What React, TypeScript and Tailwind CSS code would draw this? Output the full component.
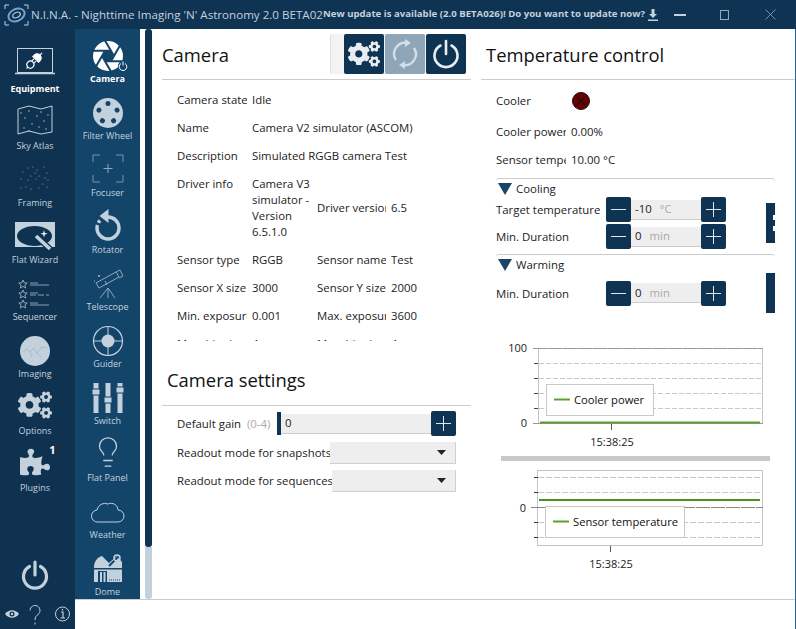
import React from "react";
import { FaCogs, FaPuzzlePiece } from "react-icons/fa";
import { Lightbulb } from "lucide-react";

const L = "#c3d1dd";
const D = "#8fa8bc";

function NavItem({ label, active, children }: { label: string; active?: boolean; children: React.ReactNode }) {
  return (
    <div className="relative flex h-[57px] shrink-0 flex-col items-center">
      <div className="flex h-[36px] w-[40px] items-center justify-center">{children}</div>
      <div className={`h-[14px] whitespace-nowrap text-[9px] leading-[15px] ${active ? "font-bold text-white" : "text-[#c3d1dd]"}`}>{label}</div>
    </div>
  );
}

const Svg = ({ children }: { children: React.ReactNode }) => (
  <svg width="40" height="36" viewBox="0 0 40 36">{children}</svg>
);

const Power = ({ size = 30, w = 3, c = L }: { size?: number; w?: number; c?: string }) => (
  <svg width={size} height={size} viewBox="0 0 30 30" fill="none" stroke={c} strokeWidth={w} strokeLinecap="round">
    <path d="M9.5 6.5a11.5 11.5 0 1 0 11 0" />
    <path d="M15 2v13" />
  </svg>
);

function Aperture() {
  return (
    <Svg>
      <g transform="translate(20 21)">
        <circle r="15" fill="#fff" />
        <polygon points="6,0 3,5.2 -3,5.2 -6,0 -3,-5.2 3,-5.2" fill="#13456b" />
        {[0, 60, 120, 180, 240, 300].map((a) => (
          <line key={a} x1="3" y1="5.2" x2="12" y2="-10.4" stroke="#13456b" strokeWidth="2" transform={`rotate(${a})`} />
        ))}
      </g>
      <circle cx="35" cy="31" r="5" fill="#13456b" />
      <g fill="none" stroke="#fff" strokeWidth="1">
        <path d="M33 28.5a3.8 3.8 0 1 0 4 0" />
        <path d="M35 26.5v4" />
      </g>
    </Svg>
  );
}

function Rotator() {
  return (
    <Svg>
      <path d="M20 11a11 11 0 1 1-11 11" fill="none" stroke={L} strokeWidth="3.4" />
      <path d="M9 22a11 11 0 0 1 3-7.5" fill="none" stroke={L} strokeWidth="3.4" strokeDasharray="3 2.4" />
      <path d="M20.5 3v14l-9-7z" fill={L} />
    </Svg>
  );
}

function Dome() {
  return (
    <Svg>
      <path d="M6 34V19C6 13 10 9 14 8l7 7 8-7 5 6v20z" fill={L} />
      <path d="M21 18L30 9" stroke="#13456b" strokeWidth="2" />
      <circle cx="29" cy="10" r="3" fill="none" stroke={L} strokeWidth="1.5" />
      <rect x="5" y="20" width="30" height="1.5" fill="#13456b" />
      <rect x="10" y="23" width="9" height="11" fill="#13456b" />
      <rect x="12" y="24" width="2" height="10" fill={L} />
      <rect x="15.5" y="24" width="2" height="10" fill={L} />
      <path d="M21 32h11" stroke="#13456b" strokeWidth="1" strokeDasharray="1 1" />
    </Svg>
  );
}

function Equipment() {
  return (
    <Svg>
      <rect x="2.500" y="3.500" width="35" height="24" fill="none" stroke={L} strokeWidth="1" />
      <path d="M0 28.500h40" stroke={L} strokeWidth="1.400" />
      <g transform="rotate(-45 20 15)" fill="none" stroke="#fff" strokeWidth="1.200">
        <circle cx="13.500" cy="15" r="3.500" />
        <path d="M8 15h2M17 13.500h3M17 16.500h3" />
        <path d="M21 11h2a4 4 0 0 1 0 8h-2z" fill="#fff" />
        <path d="M27 15h3" />
      </g>
    </Svg>
  );
}

function SkyAtlas() {
  const pts = [[6, 11], [10, 16], [14, 9], [17, 22], [22, 14], [26, 10], [29, 19], [33, 13], [9, 26], [24, 25], [31, 27], [14, 29]];
  return (
    <Svg>
      <path d="M3 7l11-3 12 3 11-3v26l-11 2-12-3-11 3z" fill="none" stroke={L} strokeWidth="1" />
      {pts.map(([x, y], i) => <circle key={i} cx={x} cy={y} r="0.7" fill={L} />)}
    </Svg>
  );
}

function Framing() {
  const pts = [[8, 13], [13, 9], [18, 8], [22, 11], [29, 8], [6, 20], [13, 21], [16, 17], [21, 20], [24, 17], [30, 19], [33, 21], [11, 28], [16, 30], [24, 29], [28, 25], [32, 28], [6, 29], [20, 14], [32, 14]];
  return <Svg>{pts.map(([x, y], i) => <circle key={i} cx={x} cy={y} r="0.6" fill={D} />)}</Svg>;
}

function FlatWizard() {
  return (
    <Svg>
      <rect x="0" y="6" width="40" height="25" fill={L} />
      <ellipse cx="19.500" cy="20" rx="17.500" ry="10" fill="#0f3250" />
      <path d="M21 20l14 13" stroke="#0f3250" strokeWidth="6" />
      <path d="M21 20l14 13" stroke={L} strokeWidth="3.600" />
      <path d="M29 14l.8 3 3 .8-3 .8-.8 3-.8-3-3-.8 3-.8z" fill="#fff" />
    </Svg>
  );
}

function Sequencer() {
  return (
    <Svg>
      {[11, 21, 31].map((y, i) => (
        <g key={y}>
          <path d={`M8 ${y - 4}l1.2 2.8 3 .2-2.300 2 .7 3-2.600-1.600-2.600 1.600.7-3-2.300-2 3-.2z`} fill="none" stroke={L} strokeWidth="0.7" />
          <path d={`M15 ${y - 1}h8`} stroke={L} strokeWidth="0.7" />
          <path d={`M15 ${y + 1}h19`} stroke={L} strokeWidth="0.7" strokeDasharray={i === 1 ? "6 2" : undefined} />
        </g>
      ))}
    </Svg>
  );
}

function Imaging() {
  return (
    <Svg>
      <circle cx="20" cy="21" r="15" fill={L} />
      <path d="M8 22l4-3 3 3 4-4 3 5 5-6 5 1M15 22l2 5M22 23l4 4" fill="none" stroke="#8ea4b5" strokeWidth="0.5" />
    </Svg>
  );
}

function Guider() {
  return (
    <Svg>
      <circle cx="20" cy="21" r="14.500" fill="none" stroke={L} strokeWidth="1.200" />
      <path d="M5.500 21h29M20 6.500v29" stroke={L} strokeWidth="1" />
      <circle cx="20" cy="21" r="6.500" fill={L} />
    </Svg>
  );
}

function Switch() {
  return (
    <Svg>
      {[
        [8, 12],
        [20, 20],
        [32, 10],
      ].map(([x, y]) => (
        <g key={x}>
          <rect x={x - 2.5} y="6" width="5" height="30" fill={L} />
          <rect x={x - 4} y={y} width="8" height="6" fill={L} stroke="#13456b" strokeWidth="1" />
        </g>
      ))}
    </Svg>
  );
}

function Cloud() {
  return (
    <Svg>
      <path d="M10 31a6 6 0 0 1-1-12 8 8 0 0 1 11-6 7 7 0 0 1 10 6 6 6 0 0 1 0 12z" fill="none" stroke={L} strokeWidth="1" />
    </Svg>
  );
}

function Focuser() {
  return (
    <Svg>
      <path d="M5 13V6h7M28 6h7v7M5 26v7h7M28 33h7v-7" fill="none" stroke={D} strokeWidth="1" opacity="0.8" />
      <path d="M20 15v9M15.500 19.500h9" stroke={D} strokeWidth="1" />
    </Svg>
  );
}

function FilterWheel() {
  return (
    <Svg>
      <circle cx="20" cy="21" r="15" fill={L} />
      {[0, 72, 144, 216, 288].map((a) => (
        <circle key={a} cx="20" cy="11.500" r="2.500" fill="#13456b" transform={`rotate(${a} 20 21)`} />
      ))}
    </Svg>
  );
}

function TelescopeIcon() {
  return (
    <Svg>
      <g fill="none" stroke={D} strokeWidth="1">
        <path d="M8 20l20-11 3 5-20 11z" />
        <path d="M28 9l4-2 3 6-4 2" />
        <path d="M17 18l2 4" />
        <path d="M20 25l-8 10M20 25v10M20 25l7 10" />
      </g>
      <path d="M10 13h2M11 12v2M6 18h1" stroke={L} strokeWidth="0.8" />
    </Svg>
  );
}

const Row = ({ children }: { children: React.ReactNode }) => <>{children}</>;

const Cell = ({ children, span }: { children?: React.ReactNode; span?: boolean }) => (
  <div className={`mr-[5px] overflow-hidden whitespace-nowrap py-[6px] leading-4 ${span ? "col-span-3" : ""}`}>{children}</div>
);

const Title = ({ children }: { children: React.ReactNode }) => <div className="pt-[1px] text-[18.400px] leading-[26px] text-[#111]">{children}</div>;

const Stepper = ({ value, unit }: { value: string; unit: string }) => (
  <div className="flex h-[25px] items-center">
    <IconBtn kind="minus" />
    <div className="flex h-[20px] w-[70px] items-center gap-[8px] border-b border-[#ccc] bg-[#eee] pl-[4px]">
      <span>{value}</span>
      <span className="text-[#aaa]">{unit}</span>
    </div>
    <IconBtn kind="plus" />
  </div>
);

const IconBtn = ({ kind }: { kind: "minus" | "plus" }) => (
  <div className="flex h-[25px] w-[25px] shrink-0 items-center justify-center rounded-[2px] bg-[#0f3353]">
    <svg width="15" height="15" viewBox="0 0 15 15" stroke="#dfe7ee" strokeWidth="1">
      <path d="M0 7.500h15" />
      {kind === "plus" && <path d="M7.500 0v15" />}
    </svg>
  </div>
);

const Triangle = () => (
  <svg width="14" height="12" viewBox="0 0 14 12" className="shrink-0"><path d="M0 0h14L7 12z" fill="#1a4468" /></svg>
);

const Select = ({ label, w }: { label: string; w: string }) => (
  <div className="flex h-[22px] items-center">
    <div className="flex-1 overflow-hidden whitespace-nowrap">{label}</div>
    <div className={`flex h-[22px] items-center justify-end border-b border-r border-[#d0d0d0] bg-[#eee] pr-[9px] ${w}`}>
      <svg width="9" height="5" viewBox="0 0 9 5"><path d="M0 0h9L4.500 5z" fill="#222" /></svg>
    </div>
  </div>
);

function Chart1() {
  return (
    <svg width="294" height="116" viewBox="481 340 294 116" className="block" fontFamily="'Open Sans', sans-serif" fontSize="11">
      <rect x="538.500" y="348.500" width="224" height="75" fill="#fff" stroke="#c4c4c4" />
      <path d="M533 348.500h230" stroke="#999" strokeDasharray="14 1" />
      {[363.500, 378.500, 393.500, 408.500].map((y) => (
        <g key={y}>
          <path d={`M539 ${y}h224`} stroke="#c8c8c8" strokeDasharray="5 2" />
          <path d={`M534 ${y}h4`} stroke="#445" />
        </g>
      ))}
      <path d="M533 423.500h230" stroke="#999" />
      <path d="M540 422.500h220" stroke="#5f9e2e" strokeWidth="2" />
      <path d="M611.500 424v6" stroke="#556" />
      <text x="527" y="352" textAnchor="end" fill="#222">100</text>
      <text x="527" y="427" textAnchor="end" fill="#222">0</text>
      <text x="612" y="446" textAnchor="middle" fill="#222">15:38:25</text>
      <rect x="546.500" y="384.500" width="107" height="31" fill="#fff" stroke="#c8c8c8" />
      <path d="M554 399.500h16" stroke="#5f9e2e" strokeWidth="2" />
      <text x="574" y="404" fill="#111" fontSize="11.200">Cooler power</text>
    </svg>
  );
}

function Chart2() {
  return (
    <svg width="294" height="114" viewBox="481 461 294 114" className="block" fontFamily="'Open Sans', sans-serif" fontSize="11">
      <rect x="537.500" y="470.500" width="225" height="75" fill="#fff" stroke="#c4c4c4" />
      {[477.500, 492.500, 522.500, 537.500].map((y) => (
        <g key={y}>
          <path d={`M538 ${y}h225`} stroke="#c8c8c8" strokeDasharray="6 2" />
          <path d={`M534 ${y}h4`} stroke="#334" />
        </g>
      ))}
      <path d="M531 507.500h232" stroke="#888" strokeDasharray="14 1" />
      <path d="M539 500h221" stroke="#4f8f1e" strokeWidth="2" />
      <path d="M610.500 546v6" stroke="#556" />
      <text x="526" y="512" textAnchor="end" fill="#222">0</text>
      <text x="611" y="568" textAnchor="middle" fill="#222">15:38:25</text>
      <rect x="545.500" y="506.500" width="139" height="31" fill="#fff" stroke="#c8c8c8" />
      <path d="M553 521.500h16" stroke="#5f9e2e" strokeWidth="2" />
      <text x="573" y="526" fill="#111" fontSize="11.200">Sensor temperature</text>
    </svg>
  );
}

export default function App() {
  return (
    <div className="flex h-[629px] w-[796px] flex-col overflow-hidden bg-white text-[11.400px] text-[#222]" style={{ fontFamily: "'Open Sans', 'Noto Sans', sans-serif" }}>
      {/* title bar */}
      <div className="flex h-[29px] shrink-0 items-center whitespace-nowrap bg-[#0f3353] text-[#c3d1dd]">
        <div className="flex w-[31px] shrink-0 justify-center pl-[2px]">
          <svg width="25" height="22" viewBox="0 0 25 22" fill="none">
            <path d="M1 5V1h4M20 1h4v4M1 17v4h4M20 21h4v-4" stroke="#c3d1dd" strokeWidth="1" />
            <ellipse cx="12.500" cy="11" rx="8.500" ry="6" stroke="#6fa6d6" strokeWidth="2" transform="rotate(-25 12.500 11)" />
            <ellipse cx="12.500" cy="11" rx="4" ry="2.500" stroke="#c3d1dd" strokeWidth="1.200" transform="rotate(-25 12.500 11)" />
          </svg>
        </div>
        <span className="w-[292px] shrink-0 text-[11.600px]">N.I.N.A. - Nighttime Imaging 'N' Astronomy 2.0 BETA02</span>
        <span className="w-[323px] shrink-0 text-[9.600px] font-bold">New update is available (2.0 BETA026)! Do you want to update now?</span>
        <svg width="12" height="12" viewBox="0 0 12 12" className="ml-[1px] shrink-0" fill="#c3d1dd">
          <path d="M4.500 0h3v5H10L6 9 2 5h2.500zM1 10.500h10V12H1z" />
        </svg>
        <div className="ml-[15px] h-[2px] w-[12px] shrink-0 bg-[#c3d1dd]" />
        <div className="ml-[34px] h-[10px] w-[9px] shrink-0 border border-[#8fa8bc]" />
        <svg width="11" height="11" viewBox="0 0 11 11" className="ml-[36px] shrink-0" stroke="#8fa8bc" strokeWidth="0.8">
          <path d="M0.500 0.500l10 10M10.500 0.500l-10 10" />
        </svg>
      </div>

      <div className="flex min-h-0 flex-1 border-r border-[#1668ad]">
        {/* primary nav */}
        <div className="flex w-[75px] shrink-0 flex-col bg-[#0f3250] pr-[5px] pt-[16px]">
          <NavItem label="Equipment" active><Equipment /></NavItem>
          <NavItem label="Sky Atlas"><SkyAtlas /></NavItem>
          <NavItem label="Framing"><Framing /></NavItem>
          <NavItem label="Flat Wizard"><FlatWizard /></NavItem>
          <NavItem label="Sequencer"><Sequencer /></NavItem>
          <NavItem label="Imaging"><Imaging /></NavItem>
          <NavItem label="Options"><FaCogs size={34} color={L} /></NavItem>
          <NavItem label="Plugins">
            <FaPuzzlePiece size={30} color={L} />
            <div className="absolute left-[45px] top-[-1px] flex h-[14px] w-[15px] items-center justify-center bg-[#12304b] text-[11px] font-bold text-white">1</div>
          </NavItem>
          <div className="mt-auto flex justify-center pb-[9px]"><Power size={30} w={3.200} /></div>
          <div className="mr-[-5px] flex h-[30px] items-start justify-between px-[4px]">
            <svg width="16" height="20" viewBox="0 0 16 20" className="mt-[5px]"><path d="M1 10c4-5 10-5 14 0-4 5-10 5-14 0z" fill={L} /><circle cx="8" cy="10" r="2.500" fill="#0f3250" /><circle cx="8" cy="10" r="1.200" fill={L} /></svg>
            <svg width="20" height="22" viewBox="0 0 20 22" className="mr-[4px] mt-[5px]" fill="none" stroke={L} strokeWidth="1"><path d="M5 6.500a5 5 0 1 1 8 4c-2 1.500-3 2.500-3 5.500M10 18.500v2" /></svg>
            <svg width="17" height="20" viewBox="0 0 17 20" className="mt-[5px]" fill="none" stroke={L}><circle cx="8.500" cy="10" r="7" /><path d="M7 8h2v6M6.500 14h4.500M8.500 5v1.500" strokeWidth="1.200" /></svg>
          </div>
        </div>

        <div className="flex min-w-0 flex-1 flex-col">
          <div className="flex h-[570px] shrink-0">
            {/* secondary nav */}
            <div className="flex w-[65px] shrink-0 flex-col overflow-hidden bg-[#13456b] pt-[6px]">
              <NavItem label="Camera" active><Aperture /></NavItem>
              <NavItem label="Filter Wheel"><FilterWheel /></NavItem>
              <NavItem label="Focuser"><Focuser /></NavItem>
              <NavItem label="Rotator"><Rotator /></NavItem>
              <NavItem label="Telescope"><TelescopeIcon /></NavItem>
              <NavItem label="Guider"><Guider /></NavItem>
              <NavItem label="Switch"><Switch /></NavItem>
              <NavItem label="Flat Panel"><Lightbulb size={34} color={L} strokeWidth={0.9} /></NavItem>
              <NavItem label="Weather"><Cloud /></NavItem>
              <NavItem label="Dome"><Dome /></NavItem>
            </div>

            {/* scrollbar */}
            <div className="ml-[5px] flex w-[7px] shrink-0 flex-col">
              <div className="h-[518px] rounded-[3px] bg-[#0f3353]" />
              <div className="flex-1 rounded-b-[3px] bg-[#c3d1dd]" />
            </div>

            {/* camera pane */}
            <div className="ml-[10px] w-[309px] shrink-0">
              <div className="flex h-[51px] items-center justify-between border-b border-[#ccc]">
                <Title>Camera</Title>
                <div className="mr-[5px] mt-[-1px] flex h-[40px] items-center rounded-[2px] border-l border-[#ddd] bg-[#f3f3f3] pl-[13px]">
                  <div className="flex h-[40px] w-[40px] items-center justify-center rounded-[2px] bg-[#0f3353]"><FaCogs size={32} color="#e8edf2" /></div>
                  <div className="ml-[1px] flex h-[40px] w-[40px] items-center justify-center rounded-[2px] bg-[#8fa6b8]">
                    <svg width="30" height="30" viewBox="0 0 30 30" fill="none" stroke="#d5dee6" strokeWidth="2.400">
                      <path d="M6 21a11 11 0 0 1 11-17" />
                      <path d="M24 9a11 11 0 0 1-11 17" />
                      <path d="M15 0l6 4-6 4zM15 22v8l-6-4z" fill="#d5dee6" stroke="none" />
                    </svg>
                  </div>
                  <div className="ml-[1px] flex h-[40px] w-[40px] items-center justify-center rounded-[2px] bg-[#0f3353]"><Power size={30} w={2.600} c="#e8edf2" /></div>
                </div>
              </div>
              <div className="h-[261px] overflow-hidden pl-[15px] pt-[6px]">
                <div className="grid grid-cols-[75px_65px_74px_1fr] items-start">
                  <Row><Cell>Camera state</Cell><Cell span>Idle</Cell></Row>
                  <Row><Cell>Name</Cell><Cell span>Camera V2 simulator (ASCOM)</Cell></Row>
                  <Row><Cell>Description</Cell><Cell span>Simulated RGGB camera Test</Cell></Row>
                  <Row>
                    <Cell>Driver info</Cell>
                    <Cell>Camera V3<br />simulator -<br />Version<br />6.5.1.0</Cell>
                    <div className="mr-[5px] self-center overflow-hidden whitespace-nowrap leading-4">Driver version</div>
                    <div className="self-center leading-4">6.5</div>
                  </Row>
                  <Row><Cell>Sensor type</Cell><Cell>RGGB</Cell><Cell>Sensor name</Cell><Cell>Test</Cell></Row>
                  <Row><Cell>Sensor X size</Cell><Cell>3000</Cell><Cell>Sensor Y size</Cell><Cell>2000</Cell></Row>
                  <Row><Cell>Min. exposure</Cell><Cell>0.001</Cell><Cell>Max. exposure</Cell><Cell>3600</Cell></Row>
                  <Row><Cell>Max. binning</Cell><Cell>4</Cell><Cell>Max. binning</Cell><Cell>4</Cell></Row>
                </div>
              </div>
              <div className="flex h-[65px] items-end border-b border-[#ccc] pb-[12px] pl-[5px]"><Title>Camera settings</Title></div>
              <div className="pl-[15px] pr-[15px] pt-[5px]">
                <div className="flex h-[25px] items-center">
                  <span className="w-[70px] shrink-0 whitespace-nowrap">Default gain</span>
                  <span className="w-[30px] shrink-0 whitespace-nowrap text-[#aaa]">(0-4)</span>
                  <div className="h-[23px] w-[4px] shrink-0 bg-[#0f3353]" />
                  <div className="flex h-[20px] flex-1 items-center border-b border-[#ccc] bg-[#eee] pl-[4px]">0</div>
                  <IconBtn kind="plus" />
                </div>
                <div className="mt-[6px] flex flex-col gap-[6px]">
                  <Select label="Readout mode for snapshots" w="w-[126px]" />
                  <Select label="Readout mode for sequences" w="w-[124px]" />
                </div>
              </div>
            </div>

            {/* temperature pane */}
            <div className="ml-[10px] min-w-0 flex-1">
              <div className="flex h-[51px] items-center border-b border-[#ccc] pl-[5px]"><Title>Temperature control</Title></div>
              <div className="w-[294px] pl-[15px]">
                <div className="flex h-[38px] items-center pt-[4px]">
                  <span className="w-[76px] shrink-0">Cooler</span>
                  <svg width="18" height="18" viewBox="0 0 18 18"><circle cx="9" cy="9" r="8.500" fill="#6d0000" stroke="#111" /><path d="M5 5l8 8M13 5l-8 8" stroke="#111" strokeWidth="1.100" /></svg>
                </div>
                <div className="flex h-[28px] items-center"><span className="mr-[5px] w-[70px] shrink-0 overflow-hidden whitespace-nowrap">Cooler power</span><span>0.00%</span></div>
                <div className="flex h-[28px] items-center"><span className="mr-[5px] w-[70px] shrink-0 overflow-hidden whitespace-nowrap">Sensor temperature</span><span>10.00 °C</span></div>

                <div className="mt-[4px] rounded-t-[3px] border-t border-[#ccc] pt-[2px]">
                  <div className="flex h-[16px] items-center gap-[4px] pl-[2px]"><Triangle /><span>Cooling</span></div>
                  <div className="flex items-center justify-between">
                    <div className="flex flex-col gap-[2px]">
                      <div className="flex items-center"><span className="w-[110px] whitespace-nowrap pt-[1px]">Target temperature</span><Stepper value="-10" unit="°C" /></div>
                      <div className="flex items-center"><span className="w-[110px] pt-[1px]">Min. Duration</span><Stepper value="0" unit="min" /></div>
                    </div>
                    <div className="relative h-[40px] w-[9px] bg-[#0f3353]">
                      <div className="absolute right-0 top-[12px] h-[5px] w-[2px] bg-white" />
                      <div className="absolute right-0 top-[23px] h-[5px] w-[2px] bg-white" />
                    </div>
                  </div>
                </div>

                <div className="mt-[5px] rounded-t-[3px] border-t border-[#ccc] pt-[2px]">
                  <div className="flex h-[16px] items-center gap-[4px] pl-[2px]"><Triangle /><span>Warming</span></div>
                  <div className="flex items-center justify-between">
                    <div className="flex items-center"><span className="w-[110px] pt-[2px]">Min. Duration</span><Stepper value="0" unit="min" /></div>
                    <div className="h-[40px] w-[9px] bg-[#0f3353]" />
                  </div>
                </div>
              </div>
              <div className="mt-[27px]">
                <Chart1 />
                <div className="ml-[20px] h-[5px] w-[269px] bg-[#c8c8c8]" />
                <Chart2 />
              </div>
            </div>
          </div>
          <div className="flex-1 border-t border-[#ccc]" />
        </div>
      </div>
    </div>
  );
}
